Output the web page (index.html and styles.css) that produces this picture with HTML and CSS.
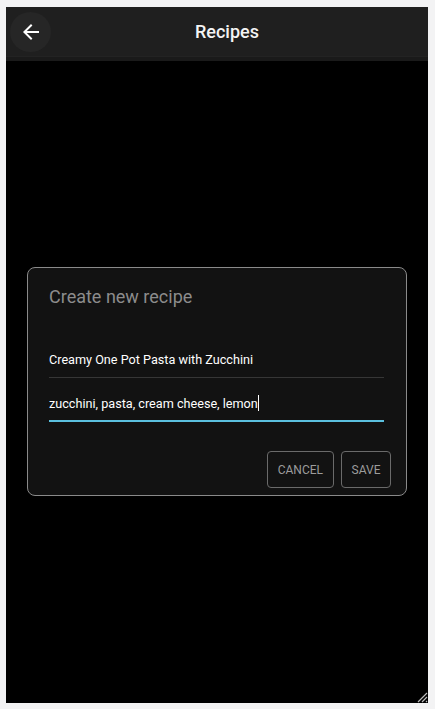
FILE: index.html
```html
<!DOCTYPE html>
<html>
<head>
<meta charset="utf-8">
<link rel="stylesheet" href="styles.css">
</head>
<body>
<div class="frame">
  <header class="topbar">
    <button class="back" aria-label="Back">
      <svg width="24" height="24" viewBox="0 0 24 24"><path d="M20 11H7.83l5.59-5.59L12 4l-8 8 8 8 1.41-1.41L7.83 13H20v-2z" fill="#fff"/></svg>
    </button>
    <h1 class="title">Recipes</h1>
    <span class="spacer"></span>
  </header>
  <main class="content">
    <section class="dialog">
      <h2 class="dialog-title">Create new recipe</h2>
      <div class="field"><span class="value">Creamy One Pot Pasta with Zucchini</span></div>
      <div class="field focused"><span class="value">zucchini, pasta, cream cheese, lemon</span><span class="caret"></span></div>
      <div class="actions">
        <button class="btn">CANCEL</button>
        <button class="btn btn-save">SAVE</button>
      </div>
    </section>
  </main>
  <svg class="grip" width="13" height="13" viewBox="0 0 13 13">
    <path d="M12 3 L3 12 M12 7 L7 12 M12 11 L11 12" stroke="#bbb" stroke-width="1.2"/>
  </svg>
</div>
</body>
</html>
```
FILE: styles.css
```css
* { box-sizing: border-box; }
html, body { margin: 0; height: 100%; }
body {
  background: #f3f3f4;
  padding: 7px 7px 6px 6px;
  font-family: Roboto, "Liberation Sans", sans-serif;
}
.frame {
  position: relative;
  height: 696px;
  width: 422px;
  background: #000;
  display: flex;
  flex-direction: column;
}
.topbar {
  height: 49px;
  background: #1f1f1f;
  display: flex;
  align-items: center;
  padding: 0 0 0 4px;
  box-shadow: 0 1px 0 #232323, 0 5px 0 #1a1a1a;
  position: relative;
  z-index: 1;
}
.back {
  width: 41px;
  height: 40px;
  border-radius: 50%;
  background: #262626;
  border: none;
  display: flex;
  align-items: center;
  justify-content: center;
  padding: 0;
  margin-top: 1px;
}
.title {
  flex: 1;
  margin: 0;
  text-align: center;
  color: #f4f4f4;
  font-size: 18px;
  font-weight: 500;
}
.spacer { width: 25px; }
.content {
  flex: 1;
  display: flex;
  align-items: center;
  justify-content: center;
  padding-top: 4px;
}
.dialog {
  width: 380px;
  background: #121212;
  border: 1px solid #8a8a8a;
  border-radius: 8px;
  padding: 17px 15px 7px 21px;
}
.dialog-title {
  margin: 0 0 27px;
  font-size: 18px;
  line-height: 24px;
  font-weight: 400;
  color: #8c8c8c;
}
.field {
  height: 42px;
  margin-right: 7px;
  border-bottom: 1px solid #363636;
  display: flex;
  align-items: center;
  padding-top: 5px;
  color: #fff;
  font-size: 12.65px;
}
.field.focused {
  height: 44px;
  border-bottom: 2px solid #5bc0de;
  padding-top: 8px;
}
.caret {
  display: inline-block;
  width: 1px;
  height: 16px;
  background: #fff;
}
.actions {
  display: flex;
  justify-content: flex-end;
  gap: 7px;
  margin-top: 29px;
}
.btn {
  height: 37px;
  padding: 0 10px;
  background: transparent;
  border: 1px solid #6a6a6a;
  border-radius: 4px;
  color: #9c9c9c;
  font-family: Roboto, "Liberation Sans", sans-serif;
  font-size: 12px;
  font-weight: 400;
}
.btn-save { width: 50px; padding: 0; }
.grip {
  position: absolute;
  right: 0;
  bottom: 0;
}
```
